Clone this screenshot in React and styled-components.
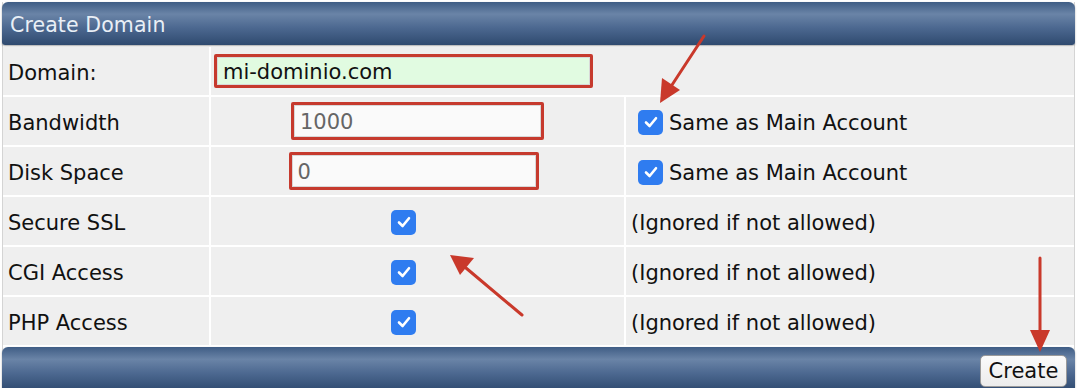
import React from "react";
import styled, { createGlobalStyle } from "styled-components";

const GlobalStyle = createGlobalStyle`
  html, body {
    margin: 0;
    padding: 0;
    background: #ffffff;
  }
  body {
    font-family: "DejaVu Sans", Verdana, sans-serif;
  }
`;

const rows = [
  { label: "Bandwidth", value: "1000", note: "Same as Main Account", shift: 0, width: 253 },
  { label: "Disk Space", value: "0", note: "Same as Main Account", shift: -4, width: 250 },
];

const flags = ["Secure SSL", "CGI Access", "PHP Access"];

export default function App() {
  return (
    <Page>
      <GlobalStyle />
      <Panel>
        <Bar top>
          <Title>Create Domain</Title>
        </Bar>
        <Grid>
          <Label>Domain:</Label>
          <Cell wide>
            <Field bg="#e1fbe1" dark width={379} defaultValue="mi-dominio.com" />
          </Cell>

          {rows.map((r) => (
            <React.Fragment key={r.label}>
              <Label>{r.label}</Label>
              <Cell center>
                <Field bg="#fafafa" width={r.width} shift={r.shift} defaultValue={r.value} />
              </Cell>
              <Cell>
                <Check />
                <Note>{r.note}</Note>
              </Cell>
            </React.Fragment>
          ))}

          {flags.map((f) => (
            <React.Fragment key={f}>
              <Label>{f}</Label>
              <Cell center>
                <Check offset />
              </Cell>
              <Cell>
                <Note>(Ignored if not allowed)</Note>
              </Cell>
            </React.Fragment>
          ))}
        </Grid>
        <Bar>
          <Button>Create</Button>
        </Bar>
      </Panel>
      <Arrows />
    </Page>
  );
}

function Check({ offset }) {
  return (
    <Box offset={offset}>
      <svg width="16" height="16" viewBox="0 0 16 16">
        <path d="M3 8.5 L6.6 12 L13 4.2" fill="none" stroke="#fff" strokeWidth="2.6" strokeLinecap="round" strokeLinejoin="round" />
      </svg>
    </Box>
  );
}

function Arrows() {
  return (
    <Overlay width="1078" height="388" viewBox="0 0 1078 388">
      <g stroke="#c9392b" strokeWidth="3" strokeLinecap="round">
        <line x1="704" y1="36" x2="670" y2="88" />
        <line x1="522" y1="315" x2="466" y2="268" />
        <line x1="1040" y1="258" x2="1040" y2="334" />
      </g>
      <g fill="#c9392b">
        <polygon points="660,103 662,78 680,90" />
        <polygon points="450,255 474,258 460,275" />
        <polygon points="1040,352 1030,330 1050,330" />
      </g>
    </Overlay>
  );
}

const Page = styled.div`
  position: relative;
  width: 1078px;
  height: 388px;
  overflow: hidden;
  background: #ffffff;
`;

const Panel = styled.div`
  margin: 2px 3px 0 2px;
  border-left: 1px solid #d4d4d4;
  border-right: 1px solid #d4d4d4;
  display: flex;
  flex-direction: column;
  gap: 2px;
`;

const Bar = styled.div`
  height: ${(p) => (p.top ? "43px" : "44px")};
  margin: 0 -1px;
  border-radius: 6px 6px ${(p) => (p.top ? "3px 3px" : "0 0")};
  background: linear-gradient(
    to bottom,
    #3f5d85 0%,
    #6a84a7 28%,
    #4c6890 60%,
    #2f4a6f 100%
  );
  box-shadow: 0 1px 2px rgba(0, 0, 0, 0.35);
  display: flex;
  align-items: ${(p) => (p.top ? "center" : "flex-end")};
  justify-content: ${(p) => (p.top ? "flex-start" : "flex-end")};
  padding: ${(p) => (p.top ? "2px 8px 0" : "0 8px 4px 0")};
  box-sizing: border-box;
`;

const Title = styled.div`
  color: #e9eff6;
  font-size: 20.5px;
  letter-spacing: 0.1px;
`;

const Grid = styled.div`
  display: grid;
  grid-template-columns: 206px 413px 1fr;
  grid-auto-rows: 48px;
  gap: 2px;
  background: #ffffff;
`;

const Label = styled.div`
  background: #efefef;
  display: flex;
  align-items: center;
  padding: 3px 0 0 5px;
  font-size: 21px;
  color: #111;
`;

const Cell = styled.div`
  background: #efefef;
  display: flex;
  align-items: center;
  justify-content: ${(p) => (p.center ? "center" : "flex-start")};
  grid-column: ${(p) => (p.wide ? "span 2" : "auto")};
  padding-left: ${(p) => (p.wide ? "3px" : p.center ? "0" : "5px")};
  gap: 6px;
`;

const Field = styled.input`
  width: ${(p) => p.width}px;
  height: ${(p) => (p.dark ? "34px" : "38px")};
  box-sizing: border-box;
  margin-left: ${(p) => (p.shift ? `${p.shift * 2}px` : "0")};
  border: 3px solid #c63a2e;
  border-radius: 2px;
  background: ${(p) => p.bg};
  box-shadow: inset 0 0 0 1px #d8d8d8;
  padding: 2px 6px 0;
  font-family: "DejaVu Sans", Verdana, sans-serif;
  font-size: 21px;
  color: ${(p) => (p.dark ? "#111" : "#666")};
  outline: none;
`;

const Box = styled.span`
  width: 25px;
  height: 25px;
  border-radius: 5px;
  background: #2f7cf0;
  display: inline-flex;
  align-items: center;
  justify-content: center;
  margin-top: 2px;
  margin-left: ${(p) => (p.offset ? "0" : "7px")};
  margin-right: ${(p) => (p.offset ? "28px" : "0")};
  flex-shrink: 0;
`;

const Note = styled.span`
  font-size: 21px;
  color: #111;
  padding-top: 3px;
`;

const Button = styled.button`
  width: 87px;
  height: 32px;
  border: 1px solid #9a9a9a;
  border-radius: 5px;
  background: linear-gradient(#fbfbfb, #ececec);
  font-family: "DejaVu Sans", Verdana, sans-serif;
  font-size: 21px;
  color: #111;
  padding: 0;
`;

const Overlay = styled.svg`
  position: absolute;
  left: 0;
  top: 0;
  pointer-events: none;
`;
